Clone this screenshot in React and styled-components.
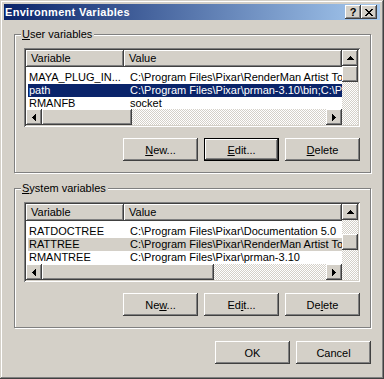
import React from "react";
import styled, { createGlobalStyle } from "styled-components";

const face = "#d4d0c8";
const raised = `inset -1px -1px #404040, inset 1px 1px #fff, inset -2px -2px #808080, inset 2px 2px ${face}`;
const sunken = `inset 1px 1px #808080, inset -1px -1px #fff, inset 2px 2px #404040, inset -2px -2px ${face}`;
const dither = `
  background-color: #fff;
  background-image: repeating-conic-gradient(${face} 0 25%, #fff 0 50%);
  background-size: 2px 2px;
`;

const GlobalStyle = createGlobalStyle`
  html, body {
    margin: 0;
    padding: 0;
    background: ${face};
  }
  body {
    font-family: "Liberation Sans", Arial, sans-serif;
  }
`;

const Window = styled.div`
  width: 384px;
  height: 379px;
  box-sizing: border-box;
  padding: 4px;
  background: ${face};
  box-shadow: inset -1px -1px #404040, inset 1px 1px ${face},
    inset -2px -2px #808080, inset 2px 2px #fff;
  display: flex;
  flex-direction: column;
  font-family: "Liberation Sans", Arial, sans-serif;
  font-size: 11px;
  color: #000;
`;

const TitleBar = styled.div`
  height: 16px;
  display: flex;
  align-items: center;
  padding: 0 3px 0 1px;
  background: linear-gradient(to right, #0a246a, #a6caf0);
`;

const Title = styled.div`
  flex: 1;
  color: #fff;
  font-weight: bold;
  font-size: 11px;
  letter-spacing: 0.3px;
  line-height: 16px;
`;

const CaptionButton = styled.div`
  width: 16px;
  height: 14px;
  box-sizing: border-box;
  background: ${face};
  box-shadow: ${raised};
  display: flex;
  align-items: center;
  justify-content: center;
  font-weight: bold;
  font-size: 11px;
  line-height: 14px;
`;

const Body = styled.div`
  flex: 1;
  display: flex;
  flex-direction: column;
  padding: 14px 9px 0 10px;
`;

const GroupBox = styled.div`
  position: relative;
  margin-top: ${(p) => p.$gap || 0}px;
  border: 1px solid #808080;
  box-shadow: inset 1px 1px #fff, 1px 1px #fff;
  padding: 13px 10px 11px 9px;
  display: flex;
  flex-direction: column;
  gap: 11px;
`;

const Legend = styled.div`
  position: absolute;
  top: -7px;
  left: 6px;
  padding: 0 2px 0 1px;
  line-height: 13px;
  background: ${face};
`;

const Key = styled.span`
  text-decoration: underline;
`;

const ListView = styled.div`
  display: grid;
  grid-template-columns: 1fr 16px;
  grid-template-rows: 17px 1fr 16px;
  height: ${(p) => p.$height}px;
  box-sizing: border-box;
  padding: 2px;
  background: #fff;
  box-shadow: ${sunken};
`;

const Header = styled.div`
  grid-column: 1;
  grid-row: 1;
  display: flex;
`;

const HeaderCell = styled.div`
  ${(p) => (p.$width ? `width: ${p.$width}px;` : "flex: 1;")}
  box-sizing: border-box;
  padding-left: 5px;
  line-height: 17px;
  background: ${face};
  box-shadow: inset -1px -1px #404040, inset 1px 1px #fff, inset -2px -2px #808080;
`;

const Rows = styled.div`
  grid-column: 1;
  grid-row: 2;
  overflow: hidden;
  padding: 4px 0 0 2px;
`;

const Row = styled.div`
  display: flex;
  height: 13px;
  line-height: 13px;
  white-space: nowrap;
  background: ${(p) =>
    p.$state === "focus" ? "#0a246a" : p.$state === "inactive" ? face : "transparent"};
  color: ${(p) => (p.$state === "focus" ? "#fff" : "#000")};
`;

const NameCell = styled.div`
  width: 96px;
  box-sizing: border-box;
  padding-left: 1px;
  overflow: hidden;
`;

const ValueCell = styled.div`
  flex: 1;
  min-width: 0;
  padding-left: 6px;
  overflow: hidden;
`;

const HScroll = styled.div`
  grid-column: 1;
  grid-row: 3;
  display: flex;
  ${dither}
`;

const VScroll = styled.div`
  grid-column: 2;
  grid-row: 1 / 4;
  display: flex;
  flex-direction: column;
  ${dither}
`;

const ScrollButton = styled.div`
  width: 16px;
  height: 16px;
  flex-shrink: 0;
  box-sizing: border-box;
  background: ${face};
  box-shadow: ${raised};
  display: flex;
  align-items: center;
  justify-content: center;
  margin-left: ${(p) => (p.$end ? "auto" : "0")};
`;

const HThumb = styled.div`
  width: ${(p) => p.$size}px;
  height: 16px;
  flex-shrink: 0;
  background: ${face};
  box-shadow: ${raised};
`;

const VThumb = styled.div`
  width: 16px;
  height: 16px;
  margin-top: ${(p) => p.$offset}px;
  flex-shrink: 0;
  background: ${face};
  box-shadow: ${raised};
`;

const ButtonRow = styled.div`
  display: flex;
  justify-content: flex-end;
  gap: 6px;
  margin-top: ${(p) => p.$gap || 0}px;
`;

const PushButton = styled.button`
  width: 75px;
  height: 23px;
  padding: 0;
  border: none;
  background: ${face};
  font: inherit;
  color: #000;
  box-shadow: ${(p) =>
    p.$default
      ? "inset 0 0 0 1px #000, inset -2px -2px #404040, inset 2px 2px #fff, inset -3px -3px #808080"
      : raised};
`;

const Arrow = ({ dir }) => {
  const paths = {
    up: "M3 0h1v1h1v1h1v1h1v1H0V3h1V2h1V1h1z",
    left: "M3 0h1v7H3V6H2V5H1V4H0V3h1V2h1V1h1z",
    right: "M0 0h1v1h1v1h1v1h1v1H3v1H2v1H1v1H0z",
  };
  const vertical = dir === "up";
  return (
    <svg width={vertical ? 7 : 4} height={vertical ? 4 : 7} viewBox={vertical ? "0 0 7 4" : "0 0 4 7"}>
      <path d={paths[dir]} fill="#000" />
    </svg>
  );
};

const CloseGlyph = () => (
  <svg width="8" height="7" viewBox="0 0 8 7">
    <path
      fill="#000"
      d="M0 0h2v1H0zM6 0h2v1H6zM1 1h2v1H1zM5 1h2v1H5zM2 2h4v1H2zM3 3h2v1H3zM2 4h4v1H2zM1 5h2v1H1zM5 5h2v1H5zM0 6h2v1H0zM6 6h2v1H6z"
    />
  </svg>
);

const userVars = [
  ["MAYA_PLUG_IN...", "C:\\Program Files\\Pixar\\RenderMan Artist Tools 5.0\\maya\\plug-ins"],
  ["path", "C:\\Program Files\\Pixar\\prman-3.10\\bin;C:\\Program Files\\Pixar\\RenderMan Artist Tools 5.0\\bin", "focus"],
  ["RMANFB", "socket"],
];

const systemVars = [
  ["RATDOCTREE", "C:\\Program Files\\Pixar\\Documentation 5.0"],
  ["RATTREE", "C:\\Program Files\\Pixar\\RenderMan Artist Tools 5.0", "inactive"],
  ["RMANTREE", "C:\\Program Files\\Pixar\\prman-3.10"],
];

const VariableList = ({ items, height, hThumb, vOffset }) => (
  <ListView $height={height}>
    <Header>
      <HeaderCell $width={98}>Variable</HeaderCell>
      <HeaderCell>Value</HeaderCell>
    </Header>
    <Rows>
      {items.map(([name, value, state]) => (
        <Row key={name} $state={state}>
          <NameCell>{name}</NameCell>
          <ValueCell>{value}</ValueCell>
        </Row>
      ))}
    </Rows>
    <HScroll>
      <ScrollButton>
        <Arrow dir="left" />
      </ScrollButton>
      <HThumb $size={hThumb} />
      <ScrollButton $end>
        <Arrow dir="right" />
      </ScrollButton>
    </HScroll>
    <VScroll>
      <ScrollButton>
        <Arrow dir="up" />
      </ScrollButton>
      <VThumb $offset={vOffset} />
    </VScroll>
  </ListView>
);

export default function App() {
  return (
    <>
      <GlobalStyle />
      <Window>
        <TitleBar>
          <Title>Environment Variables</Title>
          <CaptionButton>?</CaptionButton>
          <CaptionButton>
            <CloseGlyph />
          </CaptionButton>
        </TitleBar>
        <Body>
          <GroupBox>
            <Legend>
              <Key>U</Key>ser variables
            </Legend>
            <VariableList items={userVars} height={79} hThumb={90} vOffset={0} />
            <ButtonRow>
              <PushButton>
                <Key>N</Key>ew...
              </PushButton>
              <PushButton $default>
                <Key>E</Key>dit...
              </PushButton>
              <PushButton>
                <Key>D</Key>elete
              </PushButton>
            </ButtonRow>
          </GroupBox>
          <GroupBox $gap={15}>
            <Legend>
              <Key>S</Key>ystem variables
            </Legend>
            <VariableList items={systemVars} height={80} hThumb={172} vOffset={14} />
            <ButtonRow>
              <PushButton>
                Ne<Key>w</Key>...
              </PushButton>
              <PushButton>
                Ed<Key>i</Key>t...
              </PushButton>
              <PushButton>
                De<Key>l</Key>ete
              </PushButton>
            </ButtonRow>
          </GroupBox>
          <ButtonRow $gap={13}>
            <PushButton>OK</PushButton>
            <PushButton>Cancel</PushButton>
          </ButtonRow>
        </Body>
      </Window>
    </>
  );
}
